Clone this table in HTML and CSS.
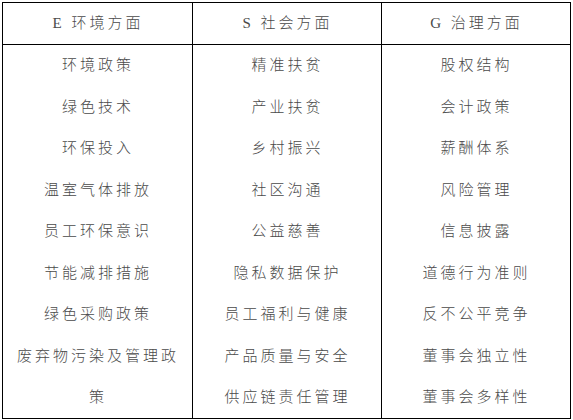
FILE: index.html
```html
<!DOCTYPE html>
<html lang="zh-CN">
<head>
<meta charset="utf-8">
<title>ESG</title>
<link rel="stylesheet" href="styles.css">
</head>
<body>
<div class="page">
  <div class="esg-table">
    <div class="cell head">E 环境方面</div>
    <div class="cell head">S 社会方面</div>
    <div class="cell head">G 治理方面</div>
    <div class="cell body">
      <div class="item">环境政策</div>
      <div class="item">绿色技术</div>
      <div class="item">环保投入</div>
      <div class="item">温室气体排放</div>
      <div class="item">员工环保意识</div>
      <div class="item">节能减排措施</div>
      <div class="item">绿色采购政策</div>
      <div class="item">废弃物污染及管理政策</div>
    </div>
    <div class="cell body">
      <div class="item">精准扶贫</div>
      <div class="item">产业扶贫</div>
      <div class="item">乡村振兴</div>
      <div class="item">社区沟通</div>
      <div class="item">公益慈善</div>
      <div class="item">隐私数据保护</div>
      <div class="item">员工福利与健康</div>
      <div class="item">产品质量与安全</div>
      <div class="item">供应链责任管理</div>
    </div>
    <div class="cell body">
      <div class="item">股权结构</div>
      <div class="item">会计政策</div>
      <div class="item">薪酬体系</div>
      <div class="item">风险管理</div>
      <div class="item">信息披露</div>
      <div class="item">道德行为准则</div>
      <div class="item">反不公平竞争</div>
      <div class="item">董事会独立性</div>
      <div class="item">董事会多样性</div>
    </div>
  </div>
</div>
</body>
</html>
```

FILE: styles.css
```css
html, body {
  margin: 0;
  padding: 0;
  background: #ffffff;
}
.page {
  padding: 2px 0 0 2px;
}
.esg-table {
  display: grid;
  grid-template-columns: 190px 189px 189px;
  grid-template-rows: 42px 374px;
  width: 568px;
  border-left: 1px solid #000;
  border-top: 1px solid #000;
  font-family: "Liberation Serif", "Noto Sans CJK SC", serif;
  font-size: 15px;
  font-weight: 300;
  letter-spacing: 3px;
  color: #4a4a4a;
}
.cell {
  border-right: 1px solid #000;
  border-bottom: 1px solid #000;
  text-align: center;
  padding: 0 9px 0 10px;
}
.head {
  line-height: 41px;
  white-space: nowrap;
}
.body {
  line-height: 41.5px;
}
```
